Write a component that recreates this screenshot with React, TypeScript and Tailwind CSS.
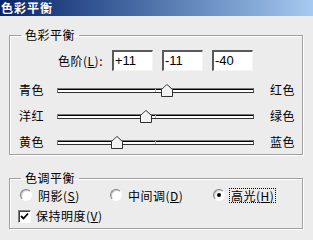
import type { ReactNode } from "react";

const font = { fontFamily: '"Noto Sans CJK SC", "Noto Sans", sans-serif' };

const sliders = [
  { left: "青色", right: "红色", value: 11 },
  { left: "洋红", right: "绿色", value: -11 },
  { left: "黄色", right: "蓝色", value: -40 },
];

const TRACK_W = 197;

function Group({ title, children, className }: { title: string; children: ReactNode; className?: string }) {
  return (
    <fieldset
      className={`mx-[9px] w-[294px] border border-[#a0a0a0] shadow-[inset_1px_1px_0_#ffffff,1px_1px_0_#ffffff] ${className ?? ""}`}
    >
      <legend className="ml-[11px] px-[4px] text-[12px] leading-[14px] tracking-[0.5px] text-black">{title}</legend>
      {children}
    </fieldset>
  );
}

function NumBox({ value }: { value: string }) {
  return (
    <div className="flex h-[21px] w-[41px] items-center border-t-2 border-l-2 border-t-[#5a5a5a] border-l-[#5a5a5a] border-b border-r border-b-[#f4f4f4] border-r-[#f4f4f4] bg-white pl-[1px] font-['Liberation_Sans'] text-[13px] text-black">
      {value}
    </div>
  );
}

function Slider({ left, right, value }: { left: string; right: string; value: number }) {
  const pos = ((value + 100) / 200) * TRACK_W;
  return (
    <div className="flex h-[20px] items-center">
      <span className="w-[38px] text-[12px] tracking-[0.5px]">{left}</span>
      <div className="relative h-[5px] w-[197px] border border-t-[#7a7a7a] border-l-[#7a7a7a] border-r-[#505050] border-b-[#303030] bg-white shadow-[inset_0_1px_0_#000000]">
        <div className="absolute left-[97px] top-0 h-[3px] w-px bg-[#b0b0b0]" />
        <svg
          width="12"
          height="13"
          viewBox="0 0 12 13"
          className="absolute top-[-5px]"
          style={{ left: pos - 6 }}
        >
          <polygon points="0.5,5.5 6,0.5 11.5,5.5 11.5,12.5 0.5,12.5" fill="#f2f2f2" stroke="#303030" />
          <polyline points="1.5,11.5 1.5,6 6,1.8" fill="none" stroke="#ffffff" />
        </svg>
      </div>
      <span className="ml-[16px] text-[12px] tracking-[0.5px]">{right}</span>
    </div>
  );
}

function Radio({ label, hot, checked, focus }: { label: string; hot: string; checked?: boolean; focus?: boolean }) {
  return (
    <div className="flex items-center">
      <span className="flex h-[12px] w-[12px] items-center justify-center rounded-full border border-t-[#808080] border-l-[#808080] border-b-[#ffffff] border-r-[#ffffff] bg-white shadow-[inset_1px_1px_0_#c8c8c8]">
        {checked && <span className="h-[4px] w-[4px] rounded-full bg-black" />}
      </span>
      <span
        className={`ml-[4px] px-px text-[12px] leading-[13px] tracking-[0.5px] ${focus ? "border border-dotted border-black" : "border border-transparent"}`}
      >
        {label}(<span className="underline">{hot}</span>)
      </span>
    </div>
  );
}

export default function App() {
  return (
    <div className="h-[240px] w-[313px] overflow-hidden bg-[#ececec] text-black" style={font}>
      <div className="flex h-[16px] items-center bg-gradient-to-r from-[#0a246a] to-[#a6caf0] pl-px text-[12px] font-bold tracking-[1px] text-white">
        色彩平衡
      </div>

      <Group title="色彩平衡" className="mt-[12px] pb-[2px]">
        <div className="mt-[8px] flex items-center">
          <span className="ml-[48px] w-[50px] text-[12px] tracking-[0.5px]">
            色阶(<span className="underline">L</span>):
          </span>
          <div className="ml-[4px] flex gap-[9px]">
            <NumBox value="+11" />
            <NumBox value="-11" />
            <NumBox value="-40" />
          </div>
        </div>
        <div className="mt-[9px] flex flex-col gap-[6px] pl-[9px]">
          {sliders.map((s) => (
            <Slider key={s.left} {...s} />
          ))}
        </div>
      </Group>

      <Group title="色调平衡" className="mt-[16px] pb-[4px]">
        <div className="mt-[2px] flex h-[16px] items-center pl-[10px]">
          <div className="w-[90px]">
            <Radio label="阴影" hot="S" />
          </div>
          <div className="w-[103px]">
            <Radio label="中间调" hot="D" />
          </div>
          <Radio label="高光" hot="H" checked focus />
        </div>
        <div className="mt-[5px] flex h-[16px] items-center pl-[8px]">
          <span className="relative flex h-[13px] w-[13px] items-center justify-center border border-t-[#808080] border-l-[#808080] border-b-[#ffffff] border-r-[#ffffff] bg-white shadow-[inset_1px_1px_0_#404040]">
            <svg width="9" height="9" viewBox="0 0 9 9">
              <polyline points="1,4 3.5,6.5 8,1.5" fill="none" stroke="#000" strokeWidth="1.8" />
            </svg>
          </span>
          <span className="ml-[5px] text-[12px] tracking-[0.5px]">
            保持明度(<span className="underline">V</span>)
          </span>
        </div>
      </Group>
    </div>
  );
}
